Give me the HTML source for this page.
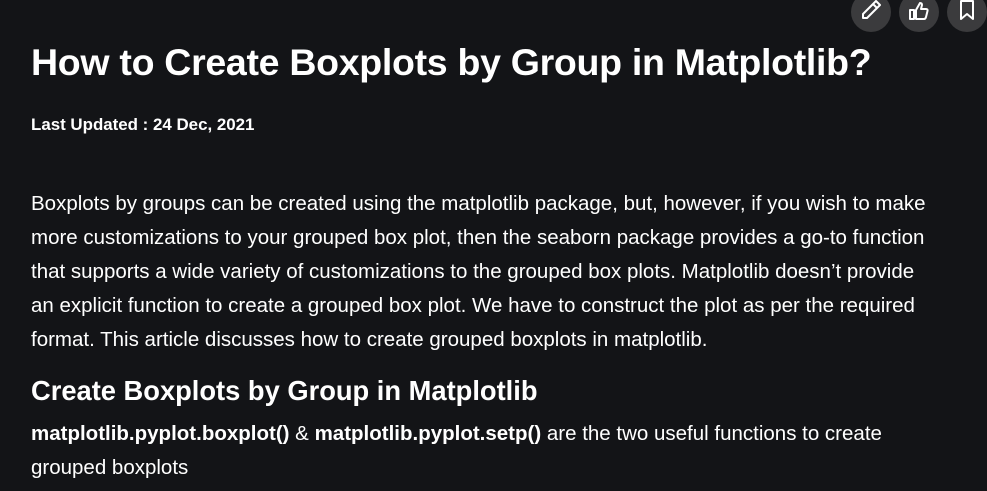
<!DOCTYPE html>
<html><head><style>
body{margin:0;background:#131417;width:987px;height:491px;overflow:hidden;font-family:"Liberation Sans",sans-serif;color:#fff;position:relative}
.c{position:absolute;top:-8px;width:40px;height:40px;border-radius:50%;background:#3b3b3d}
h1{position:absolute;left:31px;top:41px;margin:0;font-size:37.5px;font-weight:bold;letter-spacing:-0.3px;white-space:nowrap}
.d{position:absolute;left:31px;top:115px;font-size:16.9px;font-weight:bold}
.p{position:absolute;left:31px;top:187px;font-size:20.5px;line-height:34px;white-space:nowrap}
h2{position:absolute;left:31px;top:375px;margin:0;font-size:27.3px;font-weight:bold;white-space:nowrap}
.q{position:absolute;left:31px;top:417px;font-size:20.5px;line-height:34px;white-space:nowrap}
</style></head><body>
<div class="c" style="left:851px"><svg width="40" height="40" viewBox="0 0 40 40"><path d="M12 26 L12 22 L25 9 L29 13 L16 26 Z M22 12 L26 16" fill="none" stroke="#fff" stroke-width="2" stroke-linejoin="round"/></svg></div>
<div class="c" style="left:899px"><svg width="40" height="40" viewBox="0 0 40 40"><path d="M11 18 h4 v9 h-4z M17 18 l4 -7 q2 0 2 2 l-1 4 h5 q2 0 1.5 2 l-1.5 6 q-0.5 2 -2 2 h-8z" fill="none" stroke="#fff" stroke-width="2" stroke-linejoin="round"/></svg></div>
<div class="c" style="left:947px"><svg width="40" height="40" viewBox="0 0 40 40"><path d="M14 9 h12 v18 l-6 -5 l-6 5z" fill="none" stroke="#fff" stroke-width="2" stroke-linejoin="round"/></svg></div>
<h1>How to Create Boxplots by Group in Matplotlib?</h1>
<div class="d">Last Updated : 24 Dec, 2021</div>
<div class="p">Boxplots by groups can be created using the matplotlib package, but, however, if you wish to make<br>more customizations to your grouped box plot, then the seaborn package provides a go-to function<br>that supports a wide variety of customizations to the grouped box plots. Matplotlib doesn’t provide<br>an explicit function to create a grouped box plot. We have to construct the plot as per the required<br>format. This article discusses how to create grouped boxplots in matplotlib.</div>
<h2>Create Boxplots by Group in Matplotlib</h2>
<div class="q"><b>matplotlib.pyplot.boxplot()</b> &amp; <b>matplotlib.pyplot.setp()</b> are the two useful functions to create<br>grouped boxplots</div>
</body></html>
